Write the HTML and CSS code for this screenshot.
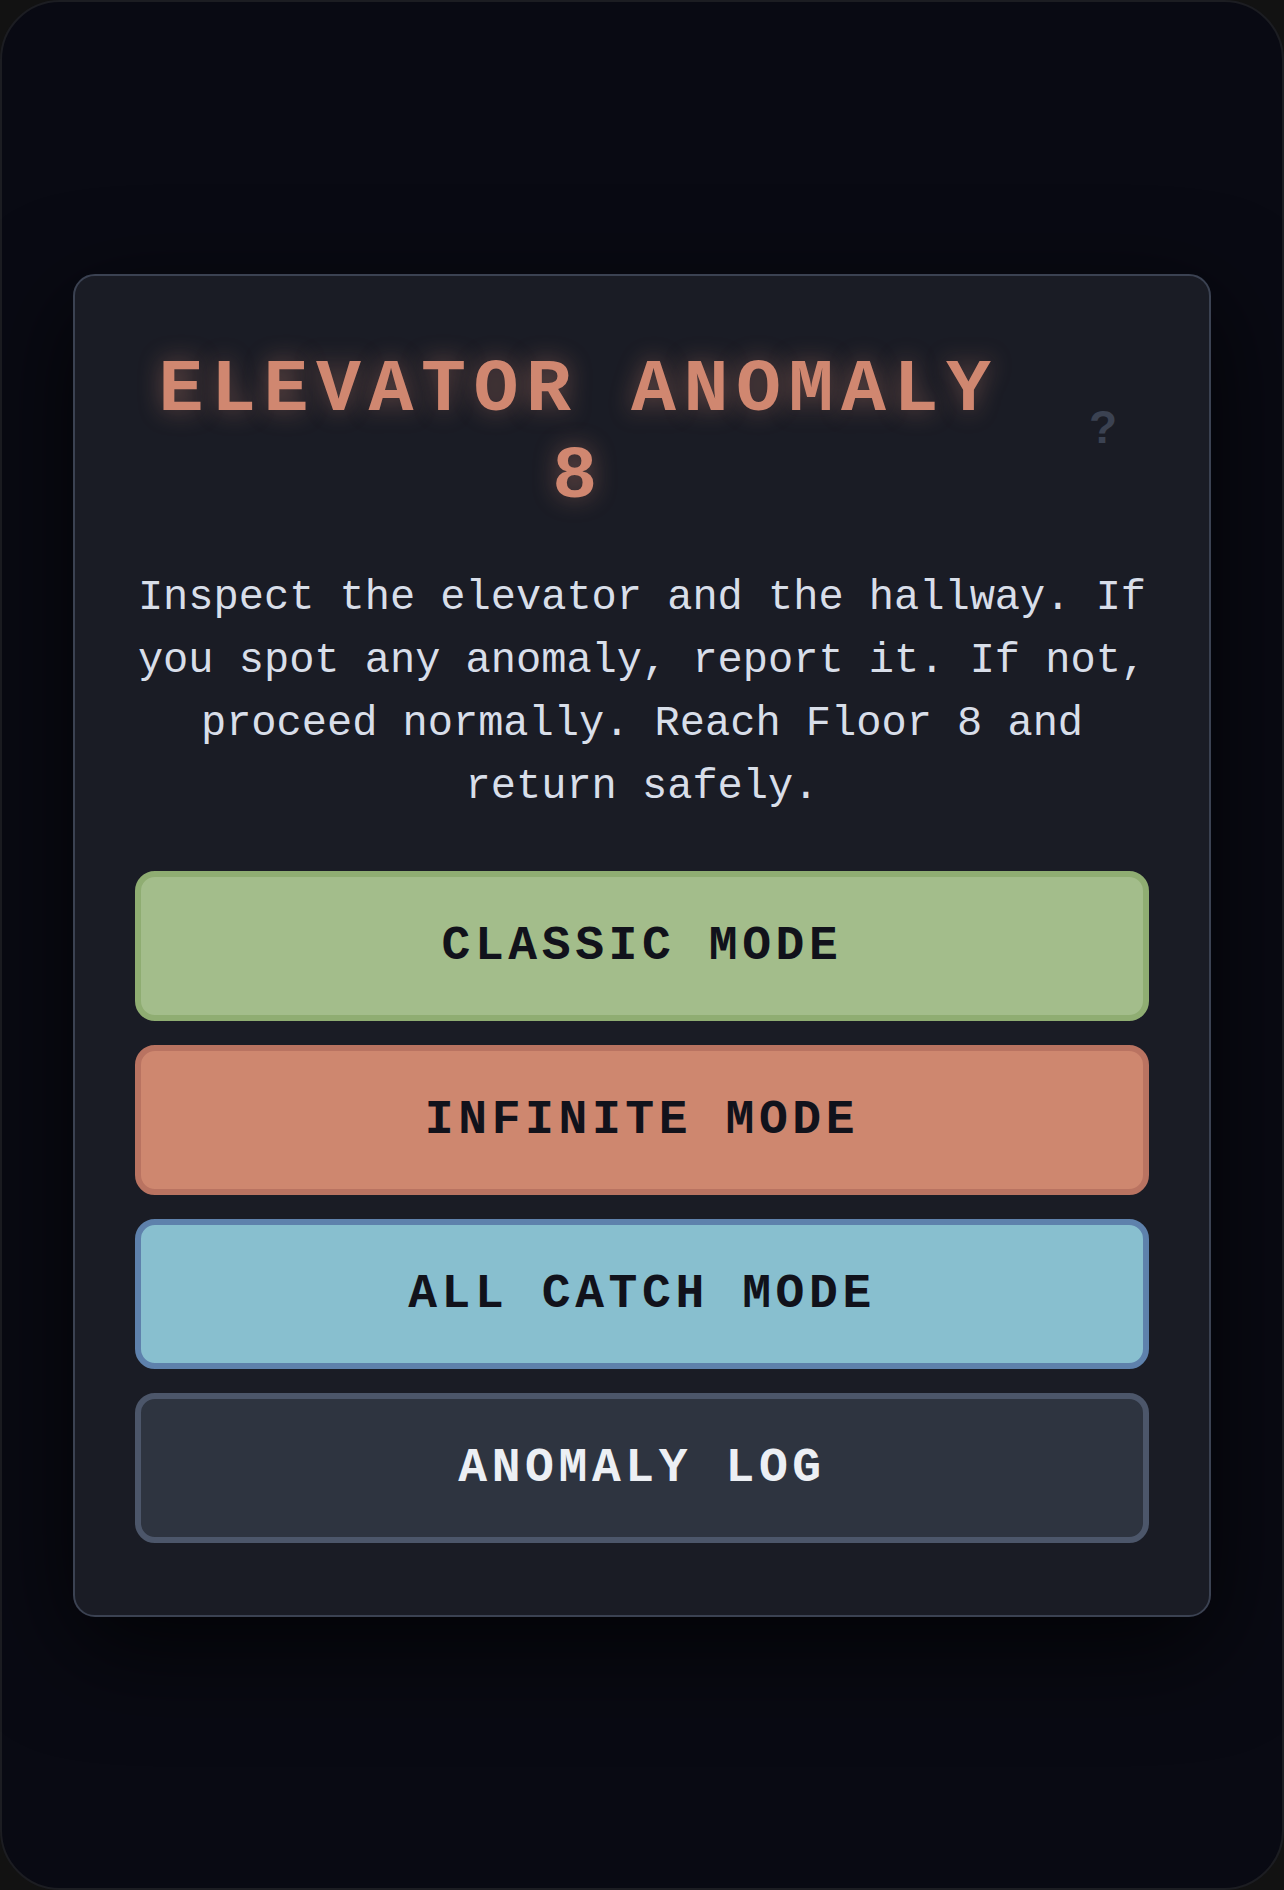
FILE: index.html
```html
<!DOCTYPE html>
<html lang="en">
<head>
<meta charset="utf-8">
<title>Elevator Anomaly 8</title>
<link rel="stylesheet" href="styles.css">
</head>
<body>
<div class="screen">
  <main class="card">
    <header class="header">
      <h1 class="title">ELEVATOR ANOMALY 8</h1>
      <button class="help" type="button">?</button>
    </header>
    <p class="intro">Inspect the elevator and the hallway. If you spot any anomaly, report it. If not, proceed normally. Reach Floor 8 and return safely.</p>
    <nav class="modes">
      <button class="mode mode-classic" type="button">CLASSIC MODE</button>
      <button class="mode mode-infinite" type="button">INFINITE MODE</button>
      <button class="mode mode-catch" type="button">ALL CATCH MODE</button>
      <button class="mode mode-log" type="button">ANOMALY LOG</button>
    </nav>
  </main>
</div>
</body>
</html>
```

FILE: styles.css
```css
* { box-sizing: border-box; }

html, body {
  margin: 0;
  padding: 0;
  background: #121212;
}

.screen {
  width: 1284px;
  height: 1890px;
  border-radius: 60px;
  border: 2px solid #1c1d22;
  background: #090a13;
  display: flex;
  align-items: center;
  justify-content: center;
  font-family: "Liberation Mono", "DejaVu Sans Mono", monospace;
}

.card {
  width: 1138px;
  background: #1a1c25;
  border: 2px solid #3b4252;
  border-radius: 22px;
  padding: 71px 60px 72px;
  box-shadow: 0 30px 100px rgba(0, 0, 0, 0.75);
}

.header {
  display: flex;
  align-items: center;
  gap: 35px;
}

.title {
  flex: 1;
  margin: 0;
  text-align: center;
  font-family: "Liberation Mono", "DejaVu Sans Mono", monospace;
  font-weight: 700;
  font-size: 75px;
  line-height: 87px;
  letter-spacing: 7.5px;
  color: #d08770;
  text-shadow: 0 0 24px rgba(208, 135, 112, 0.45);
}

.help {
  width: 92px;
  flex: none;
  margin-bottom: 14px;
  background: transparent;
  border: none;
  padding: 0;
  color: #3b4252;
  font-family: "Liberation Sans", Arial, sans-serif;
  font-weight: 700;
  font-size: 46px;
  line-height: 60px;
  text-align: center;
}

.intro {
  margin: 46px 0 52px;
  text-align: center;
  color: #d8dee9;
  font-size: 42px;
  line-height: 63px;
}

.modes {
  display: flex;
  flex-direction: column;
  gap: 24px;
}

.mode {
  height: 150px;
  width: 100%;
  border: 6px solid;
  border-radius: 20px;
  font-family: "Liberation Mono", "DejaVu Sans Mono", monospace;
  font-weight: 700;
  font-size: 48px;
  letter-spacing: 4.6px;
  color: #11121b;
  text-align: center;
  padding: 0;
}

.mode-classic {
  background: #a3bd8b;
  border-color: #8fad72;
}

.mode-infinite {
  background: #ce876f;
  border-color: #b97361;
}

.mode-catch {
  background: #88bfcf;
  border-color: #5e81ac;
}

.mode-log {
  background: #2e3440;
  border-color: #4c566a;
  color: #eceff4;
}
```
